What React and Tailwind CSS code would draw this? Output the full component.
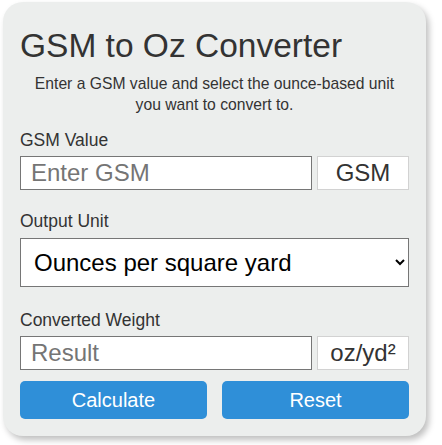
import { useState } from "react";

const FACTORS = {
    oz_yd2: { label: "Ounces per square yard", unit: "oz/yd²", factor: 0.0294935 },
    oz_ft2: { label: "Ounces per square foot", unit: "oz/ft²", factor: 0.00327706 },
    oz_m2: { label: "Ounces per square meter", unit: "oz/m²", factor: 0.035274 },
};

function App() {
    const [gsm, setGsm] = useState("");
    const [unit, setUnit] = useState("oz_yd2");
    const [result, setResult] = useState("");

    // convert gsm into the chosen ounce unit
    const calculate = () => {
        const value = parseFloat(gsm);
        if (isNaN(value)) return;
        setResult((value * FACTORS[unit].factor).toFixed(4));
    };

    const reset = () => {
        setGsm("");
        setResult("");
        setUnit("oz_yd2");
    };

    return (
        <div className="min-h-[445px] bg-white font-['Liberation_Sans',Arial,sans-serif] pt-[2px] pl-[3px]">
            <div className="w-[423px] rounded-[20px] bg-[#eceeed] px-[17px] pt-[17px] pb-[17px] shadow-[3px_4px_6px_rgba(0,0,0,0.25)]">
                <h1 className="mt-[8px] text-[33.5px] leading-[38px] text-[#333]">
                    GSM to Oz Converter
                </h1>
                <p className="mt-[8px] px-[6px] text-center text-[15.7px] leading-[21px] text-[#333]">
                    Enter a GSM value and select the ounce-based unit you want to convert to.
                </p>

                {/* gsm input */}
                <div className="mt-[15px] text-[17.5px] leading-[20px] text-[#333]">GSM Value</div>
                <div className="mt-[6px] flex gap-[5px]">
                    <input
                        type="number"
                        value={gsm}
                        onChange={(e) => setGsm(e.target.value)}
                        placeholder="Enter GSM"
                        className="h-[34px] w-[292px] border border-[#767676] bg-white px-[10px] text-[24px] text-black placeholder:text-[#757575] outline-none"
                    />
                    <div className="flex h-[34px] w-[92px] items-center justify-center border border-[#d2d2d2] bg-white text-[24px] text-[#333]">
                        GSM
                    </div>
                </div>

                {/* unit select */}
                <div className="mt-[21px] text-[17.5px] leading-[20px] text-[#333]">Output Unit</div>
                <select
                    value={unit}
                    onChange={(e) => setUnit(e.target.value)}
                    className="mt-[7px] h-[49px] w-full border border-[#767676] bg-white pl-[9px] pr-[6px] text-[24px] text-black outline-none"
                >
                    {Object.entries(FACTORS).map(([key, item]) => (
                        <option key={key} value={key}>
                            {item.label}
                        </option>
                    ))}
                </select>

                {/* result */}
                <div className="mt-[23px] text-[17.5px] leading-[20px] text-[#333]">Converted Weight</div>
                <div className="mt-[6px] flex gap-[5px]">
                    <input
                        type="text"
                        readOnly
                        value={result}
                        placeholder="Result"
                        className="h-[34px] w-[292px] border border-[#767676] bg-white px-[10px] text-[24px] text-black placeholder:text-[#757575] outline-none"
                    />
                    <div className="flex h-[34px] w-[92px] items-center justify-center border border-[#d2d2d2] bg-white text-[24px] text-[#333]">
                        {FACTORS[unit].unit}
                    </div>
                </div>

                <div className="mt-[11px] grid grid-cols-2 gap-[15px]">
                    <button
                        onClick={calculate}
                        className="h-[38px] rounded-[5px] bg-[#2f8fd8] text-[20px] text-white"
                    >
                        Calculate
                    </button>
                    <button
                        onClick={reset}
                        className="h-[38px] rounded-[5px] bg-[#2f8fd8] text-[20px] text-white"
                    >
                        Reset
                    </button>
                </div>
            </div>
        </div>
    );
}

export default App;
